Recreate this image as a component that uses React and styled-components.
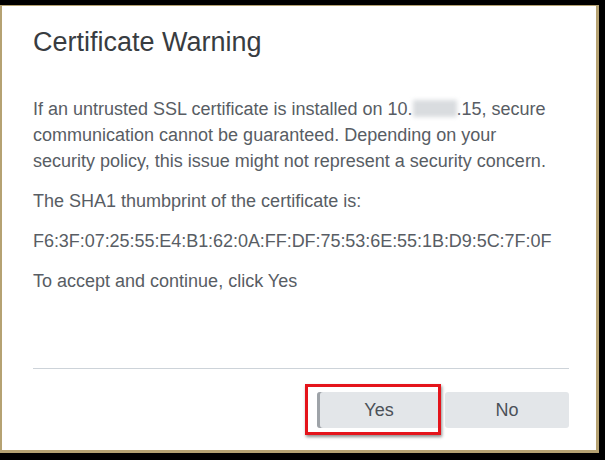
import React from "react";
import styled, { createGlobalStyle } from "styled-components";

const GlobalStyle = createGlobalStyle`
  html, body {
    margin: 0;
    padding: 0;
    background: #000;
  }
  body {
    font-family: "Liberation Sans", Arial, sans-serif;
  }
`;

const Page = styled.div`
  width: 605px;
  height: 460px;
  box-sizing: border-box;
  padding: 5px 6px 7px 0;
  background: #000;
`;

const Dialog = styled.div`
  height: 100%;
  box-sizing: border-box;
  background: #fff;
  border: 3px solid #b5a272;
  border-top-width: 1px;
  border-left-width: 2px;
  display: flex;
  flex-direction: column;
  padding: 0 27px 0 31px;
`;

const Title = styled.h1`
  margin: 21px 0 0 0;
  font-size: 27px;
  line-height: 30px;
  font-weight: 400;
  color: #383c41;
`;

const Body = styled.div`
  margin-top: 39px;
  display: flex;
  flex-direction: column;
  gap: 14px;
`;

const Para = styled.p`
  margin: 0;
  font-size: 18px;
  line-height: 26px;
  color: #585d64;
  white-space: nowrap;
  letter-spacing: ${({ $tight }) => ($tight ? "-0.05px" : "0")};
`;

const Blurred = styled.span`
  display: inline-block;
  width: 44px;
  height: 17px;
  vertical-align: -2px;
  background: #d9dcdf;
  filter: blur(2px);
`;

const Spacer = styled.div`
  flex: 1;
`;

const Divider = styled.hr`
  margin: 0;
  border: none;
  border-top: 1px solid #cdd3d9;
`;

const Footer = styled.div`
  display: flex;
  justify-content: flex-end;
  gap: 4px;
  padding: 23px 0 22px 0;
`;

const ButtonSlot = styled.div`
  position: relative;
`;

const Button = styled.button`
  width: 124px;
  height: 36px;
  border: none;
  border-radius: 3px;
  background: #e3e6e9;
  color: #4b5158;
  font-family: "Liberation Sans", Arial, sans-serif;
  font-size: 18px;
  box-shadow: ${({ $pressed }) => ($pressed ? "inset 3px 0 0 #9ea3a8" : "none")};
  cursor: pointer;
`;

const Highlight = styled.div`
  position: absolute;
  top: -8px;
  bottom: -7px;
  left: -12px;
  right: 0px;
  border: 3px solid #e4141b;
  box-shadow: 1px 2px 3px rgba(0, 0, 0, 0.45);
  pointer-events: none;
`;

export default function App() {
  return (
    <Page>
      <GlobalStyle />
      <Dialog>
        <Title>Certificate Warning</Title>
        <Body>
          <Para>
            If an untrusted SSL certificate is installed on 10.<Blurred />.15, secure
            <br />
            communication cannot be guaranteed. Depending on your
            <br />
            security policy, this issue might not represent a security concern.
          </Para>
          <Para>The SHA1 thumbprint of the certificate is:</Para>
          <Para $tight>F6:3F:07:25:55:E4:B1:62:0A:FF:DF:75:53:6E:55:1B:D9:5C:7F:0F</Para>
          <Para>To accept and continue, click Yes</Para>
        </Body>
        <Spacer />
        <Divider />
        <Footer>
          <ButtonSlot>
            <Button $pressed>Yes</Button>
            <Highlight />
          </ButtonSlot>
          <ButtonSlot>
            <Button>No</Button>
          </ButtonSlot>
        </Footer>
      </Dialog>
    </Page>
  );
}
